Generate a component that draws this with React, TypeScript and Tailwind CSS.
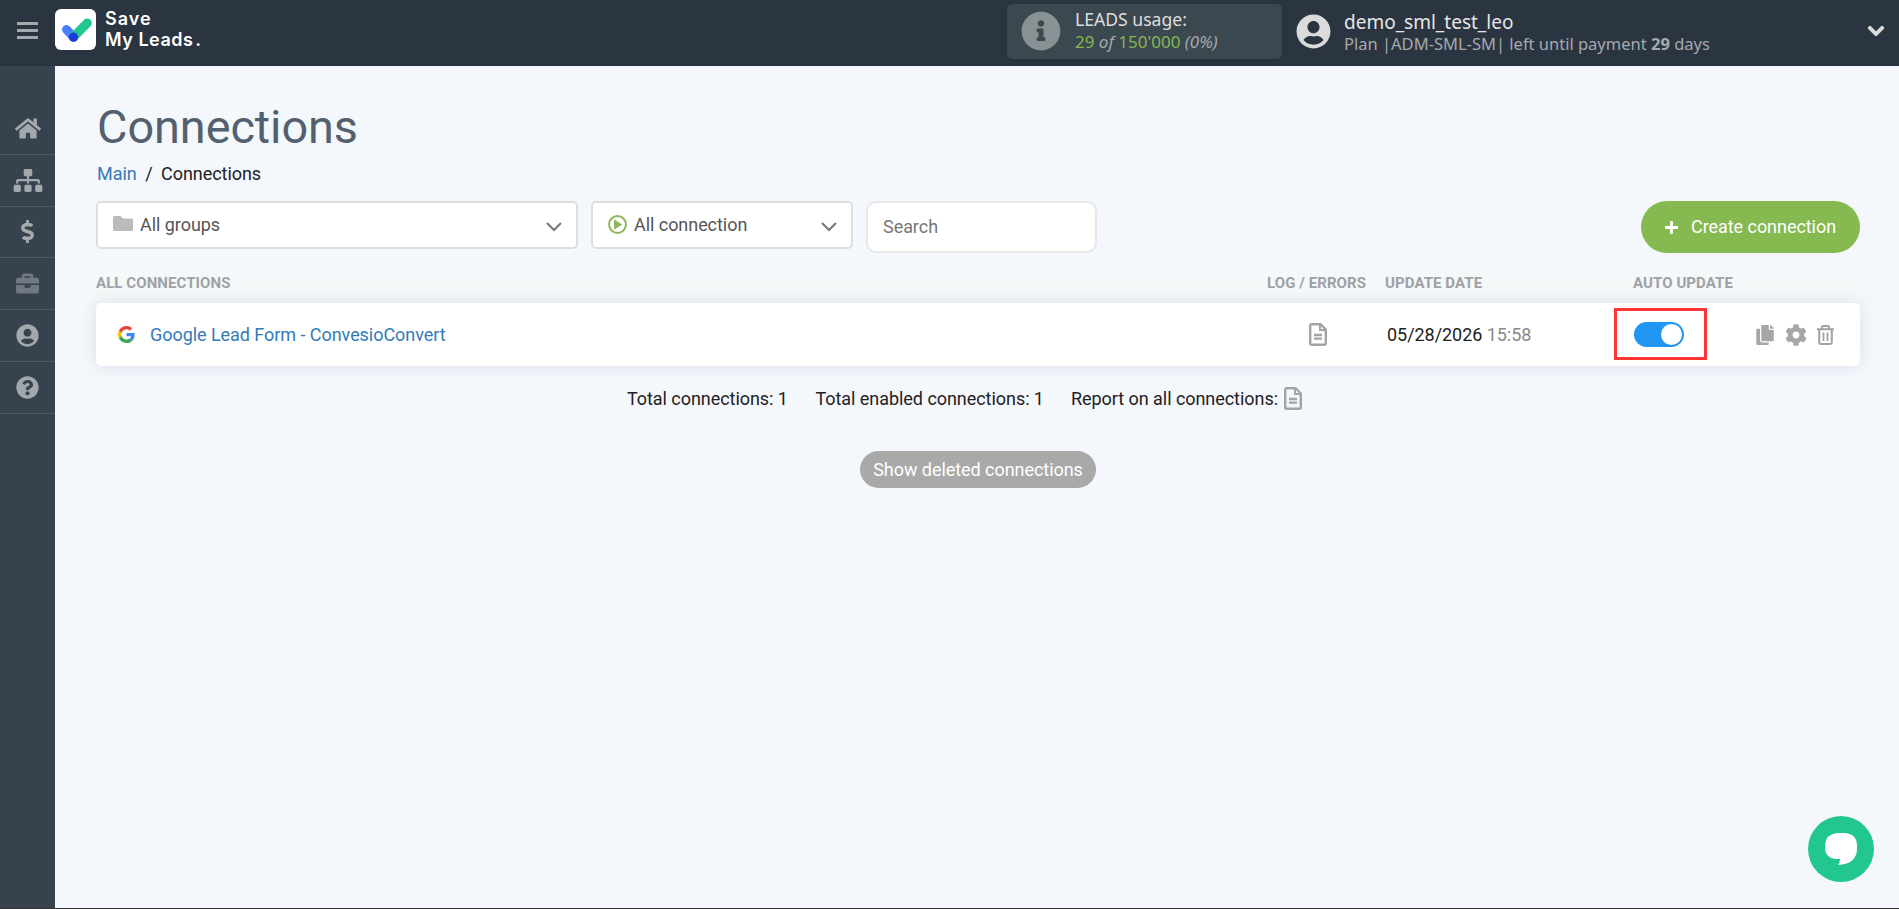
import type { ReactNode } from "react";
import {
  FaHome,
  FaSitemap,
  FaDollarSign,
  FaBriefcase,
  FaUserCircle,
  FaQuestionCircle,
  FaInfoCircle,
  FaCopy,
  FaCog,
  FaPlus,
  FaChevronDown,
} from "react-icons/fa";

const navItems = [
  { name: "home", icon: <FaHome className="h-[23px] w-[26px]" /> },
  { name: "connections", icon: <FaSitemap className="h-[23px] w-[30px]" /> },
  { name: "billing", icon: <FaDollarSign className="h-[23px] w-[23px]" /> },
  { name: "business", icon: <FaBriefcase className="h-[23px] w-[23px] text-[#707882]" /> },
  { name: "profile", icon: <FaUserCircle className="h-[23px] w-[23px]" /> },
  { name: "help", icon: <FaQuestionCircle className="h-[23px] w-[23px]" /> },
];

function Logo() {
  return (
    <svg width="41" height="41" viewBox="0 0 41 41" className="shrink-0">
      <rect width="41" height="41" rx="6" fill="#fff" />
      <g strokeWidth="9" strokeLinecap="round">
        <path d="M11.5 20.5L18.5 28" stroke="#4680ff" />
        <path d="M32.3 14L18.5 28" stroke="#22c68f" />
      </g>
      <circle cx="18.5" cy="28.2" r="4.6" fill="#1b37d6" />
    </svg>
  );
}

function DocIcon() {
  return (
    <svg width="18" height="23" viewBox="0 0 18 23" fill="none" stroke="#a4a4a4" className="shrink-0">
      <path d="M2.5 1.2H11.5L16.8 6.5V20.3a1.5 1.5 0 0 1-1.5 1.5H2.7a1.5 1.5 0 0 1-1.5-1.5V2.5a1.3 1.3 0 0 1 1.3-1.3Z" strokeWidth="2.4" />
      <path d="M11 1.5V7h5.5" strokeWidth="2" />
      <path d="M5 12h8M5 15.7h8" strokeWidth="2.3" />
    </svg>
  );
}

function TrashIcon() {
  return (
    <svg width="17" height="20" viewBox="0 0 17 20" fill="none" stroke="#a2a2a2" strokeWidth="2">
      <path d="M0 4.3h17M5 4V2.2Q5 1 6.2 1h4.6Q12 1 12 2.2V4M2.2 5v12.6q0 1.4 1.4 1.4h9.8q1.4 0 1.4-1.4V5" />
      <path d="M6.5 7.5v8.5M10.5 7.5v8.5" strokeWidth="1.8" />
    </svg>
  );
}

function GoogleIcon() {
  return (
    <svg width="17" height="17" viewBox="0 0 48 48" className="shrink-0">
      <path fill="#ea4335" d="M24 9.5c3.54 0 6.71 1.22 9.21 3.6l6.85-6.85C35.9 2.38 30.47 0 24 0 14.62 0 6.51 5.38 2.56 13.22l7.98 6.19C12.43 13.72 17.74 9.5 24 9.5z" />
      <path fill="#4285f4" d="M46.98 24.55c0-1.57-.15-3.09-.38-4.55H24v9.02h12.94c-.58 2.96-2.26 5.48-4.78 7.18l7.73 6c4.51-4.18 7.09-10.36 7.09-17.65z" />
      <path fill="#fbbc05" d="M10.53 28.59c-.48-1.45-.76-2.99-.76-4.59s.27-3.14.76-4.59l-7.98-6.19C.92 16.46 0 20.12 0 24c0 3.88.92 7.54 2.56 10.78l7.97-6.19z" />
      <path fill="#34a853" d="M24 48c6.48 0 11.93-2.13 15.89-5.81l-7.73-6c-2.15 1.45-4.92 2.3-8.16 2.3-6.26 0-11.57-4.22-13.47-9.91l-7.98 6.19C6.51 42.62 14.62 48 24 48z" />
    </svg>
  );
}

function Select({ icon, label, className }: { icon: ReactNode; label: string; className: string }) {
  return (
    <button className={`flex h-12 items-center rounded-[5px] border-2 border-[#dedede] bg-white pr-[14px] pl-[15px] text-[#555] ${className}`}>
      {icon}
      <span className="-mt-0.5 grow text-left">{label}</span>
      <svg width="16" height="10" viewBox="0 0 16 10" fill="none" stroke="#777" strokeWidth="2" className="mt-1">
        <path d="M1 1l7 7 7-7" />
      </svg>
    </button>
  );
}

function Header() {
  return (
    <header className="flex h-[66px] shrink-0 bg-[#2b3541] font-['Noto_Sans',sans-serif] tracking-normal">
      <button className="flex w-[55px] flex-col items-center justify-start gap-[4px] pt-[22px]">
        <span className="h-[3px] w-[21px] bg-[#a5a9ad]" />
        <span className="h-[3px] w-[21px] bg-[#a5a9ad]" />
        <span className="h-[3px] w-[21px] bg-[#a5a9ad]" />
      </button>
      <div className="flex w-[952px] gap-[9px] pt-[9px]">
        <Logo />
        <div className="font-[Inter,sans-serif] text-[18px] leading-[21px] font-semibold text-white">
          <div className="-mt-px tracking-[1px]">Save</div>
          <div className="tracking-[0.5px]">
            My Leads<span className="ml-[2px]">.</span>
          </div>
        </div>
      </div>
      <div className="mt-1 flex h-[55px] w-[275px] rounded-[5px] bg-[#3b4850] pl-[14px] shadow-sm">
        <FaInfoCircle className="mt-[7px] h-10 w-10 text-[#8a9194]" />
        <div className="pl-[14px]">
          <div className="mt-[4px] text-[17.6px] leading-[22px] text-[#dedede]">LEADS usage:</div>
          <div className="text-[17px] leading-[23px] text-[#a5a9ad] italic">
            <span className="text-[#84b84f] not-italic">29</span> of{" "}
            <span className="text-[#84b84f] not-italic">150'000</span> (0%)
          </div>
        </div>
      </div>
      <FaUserCircle className="mt-[14px] ml-[14px] h-[35px] w-[35px] text-[#dbdbdb]" />
      <div className="pl-[13px]">
        <div className="mt-[11px] text-[19px] leading-[22px] text-[#e6e6e6]">demo_sml_test_leo</div>
        <div className="text-[16.5px] leading-[22px] text-[#a5a9ad]">
          Plan |ADM-SML-SM| left until payment <b>29</b> days
        </div>
      </div>
      <FaChevronDown className="mt-[22px] mr-[14px] ml-auto h-[18px] w-[18px] stroke-[30px] text-[#dbdbdb]" />
    </header>
  );
}

export default function App() {
  return (
    <div className="flex h-screen flex-col border-b border-[#333] bg-[#f4f7fc] font-[Roboto,sans-serif] text-[18px] tracking-[-0.05px] text-[#212121]">
      <Header />
      <div className="flex grow">
        <nav className="w-[55px] shrink-0 bg-[#37424f] pt-[37px] text-[#a3a8ac]">
          {navItems.map((item) => (
            <a key={item.name} className="flex h-[51.8px] items-center justify-center border-b border-[#4d5966]">
              {item.icon}
            </a>
          ))}
        </nav>

        <main className="grow pr-[39px] pl-[41px]">
          <h1 className="mt-[35px] pl-[1px] text-[46.8px] leading-[53px] text-[#52616d]">Connections</h1>
          <div className="mt-[8px] flex pl-[1px] leading-[24px]">
            <a className="text-[#337ab7]">Main</a>
            <span className="px-[8.5px]">/</span>
            <span>Connections</span>
          </div>

          <div className="mt-[15px] flex">
            <Select
              className="w-[482px]"
              label="All groups"
              icon={
                <svg width="20" height="15" viewBox="0 0 20 15" className="mt-[-3px] mr-[7px]">
                  <path fill="#bbb" d="M1.5 0H7.5L10 2.5H18.5A1.5 1.5 0 0 1 20 4V13.5A1.5 1.5 0 0 1 18.5 15H1.5A1.5 1.5 0 0 1 0 13.5V1.5A1.5 1.5 0 0 1 1.5 0Z" />
                </svg>
              }
            />
            <Select
              className="ml-[13px] w-[262px]"
              label="All connection"
              icon={
                <svg width="19" height="19" viewBox="0 0 19 19" className="mt-[-1px] mr-[7px]">
                  <circle cx="9.5" cy="9.5" r="8.4" fill="none" stroke="#8db75c" strokeWidth="2" />
                  <path d="M6 4.3v10.4l8.3-5.2z" fill="#8db75c" />
                </svg>
              }
            />
            <input
              placeholder="Search"
              className="ml-[13px] h-[52px] w-[231px] rounded-[10px] border-2 border-[#e8e8e8] bg-white px-[15px] pb-[2px] placeholder:text-[#777]"
            />
            <button className="ml-auto flex h-[52px] w-[219px] items-center rounded-full bg-[#86b94f] pl-[23px] text-white">
              <FaPlus className="h-[15px] w-[15px]" />
              <span className="-mt-0.5 pl-[12px]">Create connection</span>
            </button>
          </div>

          <div className="mt-5 flex h-[30px] items-start bg-[#f4f8f9] text-[15px] leading-[20px] font-bold tracking-[0.08px] text-[#a0a1a6]">
            <span className="w-[1171px]">ALL CONNECTIONS</span>
            <span className="w-[118px]">LOG / ERRORS</span>
            <span className="w-[248px]">UPDATE DATE</span>
            <span>AUTO UPDATE</span>
          </div>

          <div className="flex h-[63px] items-center rounded-[5px] bg-white shadow-[0_0_16px_rgba(40,55,80,0.12)]">
            <div className="flex w-[1213px] items-center gap-[15px] pl-[22px]">
              <GoogleIcon />
              <a className="-mt-px text-[#337ab7]">Google Lead Form - ConvesioConvert</a>
            </div>
            <div className="-mt-px w-[78px]">
              <DocIcon />
            </div>
            <div className="w-[227px]">
              05/28/2026 <span className="text-[#8a8a8a]">15:58</span>
            </div>
            <div className="-mt-px flex h-[52px] w-[93px] items-center border-[3px] border-[#ff3535] pl-[17px]">
              <div className="flex h-[25px] w-[50px] items-center justify-end rounded-full bg-[#2196f3] pr-[2px]">
                <span className="h-[21px] w-[21px] rounded-full bg-white" />
              </div>
            </div>
            <div className="flex items-center gap-[10.5px] pl-[49px] text-[#a6a6a6]">
              <FaCopy className="h-5 w-[18px]" />
              <FaCog className="h-[22px] w-[22px]" />
              <TrashIcon />
            </div>
          </div>

          <div className="mt-[19px] flex items-center pl-[531px]">
            <span className="w-[188.5px]">Total connections: 1</span>
            <span className="w-[255.5px]">Total enabled connections: 1</span>
            <span className="pr-[6px]">Report on all connections:</span>
            <DocIcon />
          </div>

          <div className="mt-[39px] pl-[764px]">
            <button className="h-[37px] w-[236px] rounded-full bg-[#a9a9a9] text-white">Show deleted connections</button>
          </div>
        </main>
      </div>

      {/* Chat launcher */}
      <button className="absolute right-[25px] bottom-[27px] flex h-[66px] w-[66px] items-center justify-center rounded-full bg-[#22c78f]">
        <svg width="32" height="32" viewBox="0 0 32 32" fill="#fff">
          <path d="M12 0H20Q32 1 32 13V17Q31 31 13 32Q15 30 15 26H11Q0 25 0 14V12Q1 1 12 0Z" />
        </svg>
      </button>
    </div>
  );
}
